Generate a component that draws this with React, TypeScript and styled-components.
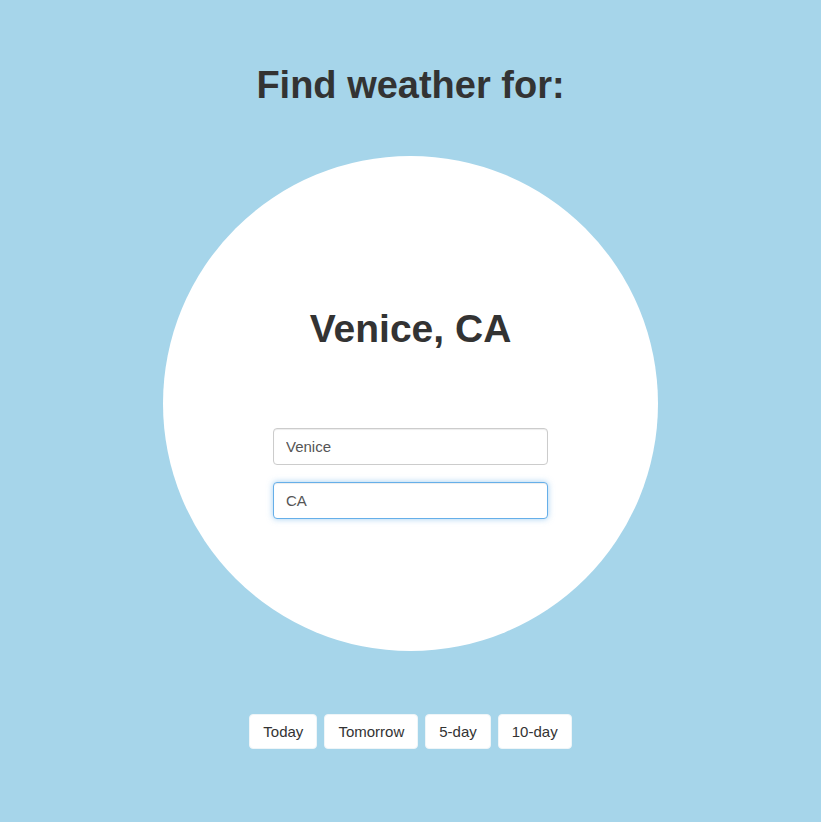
import React from "react";
import styled, { createGlobalStyle } from "styled-components";

const Global = createGlobalStyle`
  html, body { margin: 0; padding: 0; }
  body {
    background: #a6d5ea;
    font-family: "Liberation Sans", Arial, Helvetica, sans-serif;
    color: #333;
  }
`;

const Page = styled.div`
  display: flex;
  flex-direction: column;
  align-items: center;
  padding-top: 64px;
  min-height: 822px;
  box-sizing: border-box;
`;

const Title = styled.h1`
  margin: 0;
  font-size: 38px;
  line-height: 42px;
  font-weight: 700;
  color: #333;
`;

const Circle = styled.div`
  margin-top: 50px;
  width: 495px;
  height: 495px;
  border-radius: 50%;
  background: #fff;
  display: flex;
  flex-direction: column;
  align-items: center;
  padding-top: 152px;
  box-sizing: border-box;
`;

const City = styled.h2`
  margin: 0;
  font-size: 39px;
  line-height: 42px;
  font-weight: 700;
  color: #333;
`;

const Form = styled.div`
  margin-top: 78px;
  display: flex;
  flex-direction: column;
  gap: 17px;
`;

const Input = styled.input<{ $focus?: boolean }>`
  width: 275px;
  height: 37px;
  box-sizing: border-box;
  padding: 6px 12px;
  font-family: "Liberation Sans", Arial, sans-serif;
  font-size: 15px;
  color: #555;
  background: #fff;
  border: 1px solid ${(p) => (p.$focus ? "#66afe9" : "#ccc")};
  border-radius: 4px;
  outline: none;
  box-shadow: inset 0 1px 1px rgba(0, 0, 0, 0.075)
    ${(p) => (p.$focus ? ", 0 0 6px rgba(102, 175, 233, 0.6)" : "")};
`;

const Buttons = styled.div`
  margin-top: 63px;
  display: flex;
  gap: 7px;
`;

const Btn = styled.button`
  height: 35px;
  padding: 0 13px;
  font-family: "Liberation Sans", Arial, sans-serif;
  font-size: 15px;
  color: #333;
  background: #fff;
  border: 1px solid #eef5f8;
  border-radius: 4px;
  cursor: pointer;
`;

export default function App() {
  return (
    <>
      <Global />
      <Page>
        <Title>Find weather for:</Title>
        <Circle>
          <City>Venice, CA</City>
          <Form>
            <Input defaultValue="Venice" />
            <Input $focus defaultValue="CA" />
          </Form>
        </Circle>
        <Buttons>
          <Btn>Today</Btn>
          <Btn>Tomorrow</Btn>
          <Btn>5-day</Btn>
          <Btn>10-day</Btn>
        </Buttons>
      </Page>
    </>
  );
}
